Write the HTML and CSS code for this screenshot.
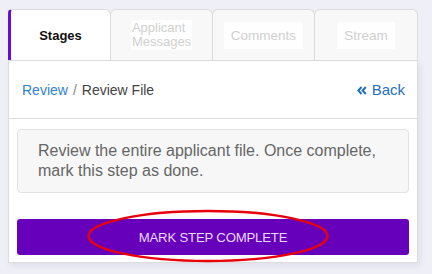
FILE: index.html
```html
<!DOCTYPE html>
<html>
<head>
<meta charset="utf-8">
<link rel="stylesheet" href="styles.css">
</head>
<body>
<div class="panel">
  <div class="tabs">
    <div class="tab active"><span class="label">Stages</span></div>
    <div class="tab"><span class="label faded two"><span class="ln">Applicant</span><span class="ln">Messages</span></span></div>
    <div class="tab"><span class="label faded">Comments</span></div>
    <div class="tab"><span class="label faded">Stream</span></div>
  </div>
  <div class="card">
    <div class="header">
      <div class="crumbs"><a class="link">Review</a><span class="sep">/</span><span class="current">Review File</span></div>
      <a class="back"><svg class="chev" width="10" height="9" viewBox="0 0 10 9"><path d="M4.5 1 L1.3 4.5 L4.5 8 M8.8 1 L5.6 4.5 L8.8 8" fill="none" stroke="currentColor" stroke-width="2"/></svg>Back</a>
    </div>
    <div class="body">
      <div class="info">Review the entire applicant file. Once complete, mark this step as done.</div>
      <div class="action">
        <button class="btn">MARK STEP COMPLETE</button>
        <svg class="ring" width="244" height="56" viewBox="0 0 244 56"><ellipse cx="122" cy="28" rx="119.5" ry="25" fill="none" stroke="#e8000b" stroke-width="2.4"/></svg>
      </div>
    </div>
  </div>
</div>
</body>
</html>
```
FILE: styles.css
```css
* { box-sizing: border-box; }
body {
  margin: 0;
  background: #efeff7;
  font-family: "Liberation Sans", Arial, sans-serif;
  width: 432px;
  height: 274px;
  overflow: hidden;
}
.panel {
  margin: 9px 0 0 8px;
  width: 410px;
}
.tabs {
  display: grid;
  grid-template-columns: 103px 102px 102px 103px;
  height: 52px;
  border-bottom: 1px solid #dcdcdc;
}
.tab {
  border: 1px solid #dcdcdc;
  border-bottom: none;
  border-radius: 6px 6px 0 0;
  background: #f8f8f8;
  display: flex;
  align-items: center;
  justify-content: center;
  margin-left: -1px;
}
.tab:first-child { margin-left: 0; }
.tab.active {
  background: #fff;
  border-left: 3px solid #6a0dd0;
  border-top-left-radius: 4px;
}
.label {
  font-size: 13px;
  font-weight: bold;
  color: #111;
}
.label.faded {
  font-weight: normal;
  color: #d0d0d0;
  background: #fefefe;
  padding: 6px 7px;
  font-size: 13.5px;
  line-height: 15px;
}
.label.two {
  display: flex;
  flex-direction: column;
  padding: 1px 1px 1px 1px;
  font-size: 13px;
  line-height: 14px;
  text-align: left;
}
.ln { display: block; }
.card {
  background: #fff;
  border: 1px solid #dcdcdc;
  border-top: none;
  box-shadow: 2px 3px 6px rgba(90, 90, 140, 0.10);
}
.header {
  height: 58px;
  padding: 0 13px;
  display: flex;
  align-items: center;
  justify-content: space-between;
  border-bottom: 1px solid #dcdcdc;
  font-size: 14px;
}
.link { color: #3282d2; }
.sep { color: #888; margin: 0 5px 0 5px; }
.current { color: #444; }
.back {
  color: #1f6fc2;
  display: flex;
  align-items: center;
  gap: 5px;
  font-size: 15px;
  margin-right: -1px;
}
.chev { margin-top: 1px; }
.body {
  padding: 10px 8px 7px 8px;
}
.info {
  background: #f7f7f7;
  border: 1px solid #e2e2e2;
  border-radius: 4px;
  padding: 11px 16px 10px 20px;
  color: #666;
  font-size: 16px;
  line-height: 20px;
  height: 64px;
}
.action {
  position: relative;
  margin-top: 26px;
}
.btn {
  display: block;
  width: 100%;
  height: 36px;
  border: none;
  border-radius: 3px;
  background: #6600bb;
  color: #ead8ff;
  font-family: "Liberation Sans", Arial, sans-serif;
  font-size: 13.2px;
  letter-spacing: -0.2px;
}
.ring {
  position: absolute;
  left: 69px;
  top: -11px;
}
```
